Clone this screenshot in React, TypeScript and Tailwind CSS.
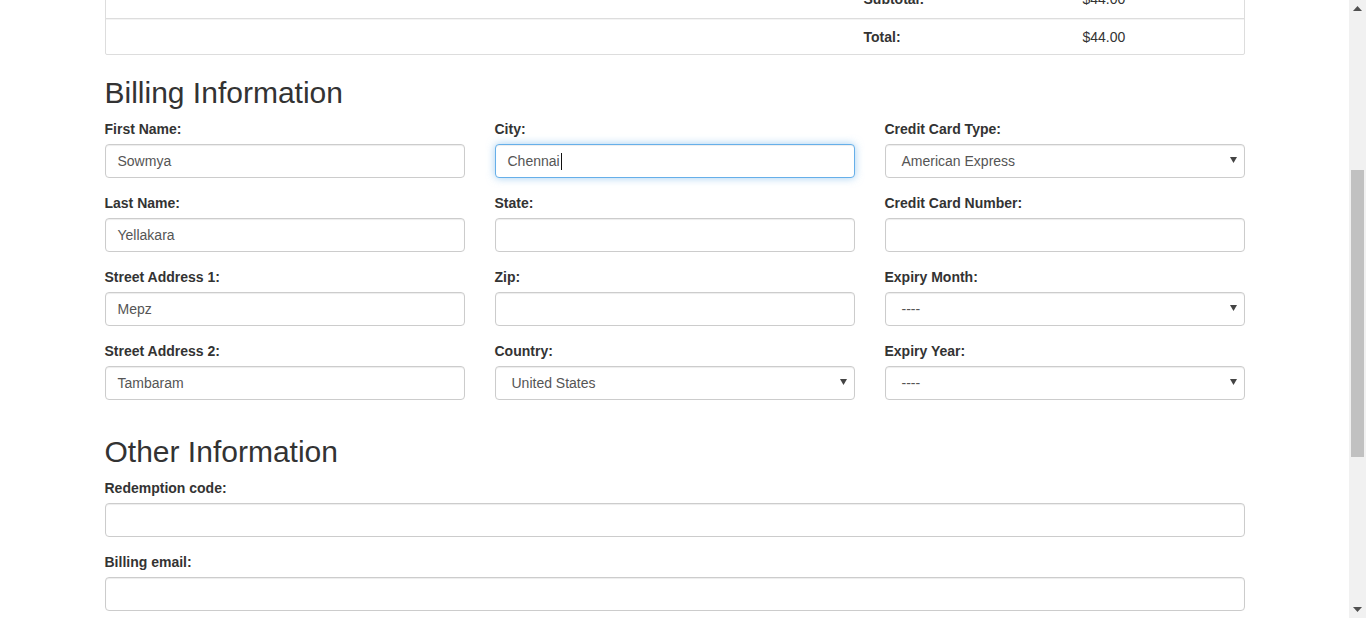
import React from "react";

const font = { fontFamily: '"Liberation Sans", Arial, Helvetica, sans-serif' };

function Label({ children }: { children: React.ReactNode }) {
  return <label className="block text-[14px] leading-[20px] font-bold text-[#333] mb-[5px]">{children}</label>;
}

function TextInput({ value, focused }: { value?: string; focused?: boolean }) {
  return (
    <div
      className={
        "h-[34px] w-full rounded-[4px] border bg-white px-[12px] flex items-center text-[14px] text-[#555] " +
        (focused
          ? "border-[#66afe9] shadow-[inset_0_1px_1px_rgba(0,0,0,0.075),0_0_8px_rgba(102,175,233,0.6)]"
          : "border-[#ccc] shadow-[inset_0_1px_1px_rgba(0,0,0,0.075)]")
      }
    >
      <span className="leading-[20px]">{value}</span>
      {focused && <span className="ml-[1px] inline-block w-[1px] h-[17px] bg-[#111]" />}
    </div>
  );
}

function SelectInput({ value }: { value: string }) {
  return (
    <div className="h-[34px] w-full rounded-[4px] border border-[#ccc] bg-white pl-[16px] pr-[7px] flex items-center justify-between text-[14px] text-[#555] shadow-[inset_0_1px_1px_rgba(0,0,0,0.075)]">
      <span className="leading-[20px]">{value}</span>
      <svg width="7" height="6" viewBox="0 0 7 6" className="mt-[-2px]">
        <path d="M0 0 H7 L3.5 6 Z" fill="#444" />
      </svg>
    </div>
  );
}

function Field({ label, children }: { label: string; children: React.ReactNode }) {
  return (
    <div className="mb-[15px]">
      <Label>{label}</Label>
      {children}
    </div>
  );
}

function Heading({ children }: { children: React.ReactNode }) {
  return <h2 className="mt-[20px] mb-[10px] text-[30px] leading-[33px] font-medium text-[#333]">{children}</h2>;
}

function Scrollbar() {
  return (
    <div className="w-[17px] h-full bg-[#f1f1f1] flex flex-col">
      <div className="h-[17px] flex items-center justify-center">
        <svg width="9" height="5" viewBox="0 0 9 5">
          <path d="M0 5 L4.5 0 L9 5 Z" fill="#505050" />
        </svg>
      </div>
      <div className="flex-1 pt-[153px] px-[2px]">
        <div className="h-[287px] bg-[#c1c1c1]" />
      </div>
      <div className="h-[17px] flex items-center justify-center">
        <svg width="9" height="5" viewBox="0 0 9 5">
          <path d="M0 0 L9 0 L4.5 5 Z" fill="#505050" />
        </svg>
      </div>
    </div>
  );
}

export default function App() {
  return (
    <div className="h-[618px] w-[1366px] overflow-hidden flex bg-white" style={font}>
      <div className="flex-1 overflow-hidden">
        <div className="w-[1170px] mx-auto px-[15px]">
          {/* totals table (scrolled, partially visible) */}
          <div className="mt-[-20px] border border-[#ddd] rounded-b-[2px] text-[14px] text-[#333]">
            <div className="grid grid-cols-[750px_219px_1fr] h-[37px] items-center">
              <div />
              <div className="px-[8px] font-bold">Subtotal:</div>
              <div className="px-[8px]">$44.00</div>
            </div>
            <div className="border-t border-[#ddd]">
              <div className="border-t border-[#f4f4f4] grid grid-cols-[750px_219px_1fr] h-[35px] items-center">
                <div />
                <div className="px-[8px] font-bold">Total:</div>
                <div className="px-[8px]">$44.00</div>
              </div>
            </div>
          </div>

          <div className="pt-[1px]">
            <Heading>Billing Information</Heading>
          </div>
          <div className="grid grid-cols-3 gap-x-[30px]">
            <div>
              <Field label="First Name:"><TextInput value="Sowmya" /></Field>
              <Field label="Last Name:"><TextInput value="Yellakara" /></Field>
              <Field label="Street Address 1:"><TextInput value="Mepz" /></Field>
              <Field label="Street Address 2:"><TextInput value="Tambaram" /></Field>
            </div>
            <div>
              <Field label="City:"><TextInput value="Chennai" focused /></Field>
              <Field label="State:"><TextInput /></Field>
              <Field label="Zip:"><TextInput /></Field>
              <Field label="Country:"><SelectInput value="United States" /></Field>
            </div>
            <div>
              <Field label="Credit Card Type:"><SelectInput value="American Express" /></Field>
              <Field label="Credit Card Number:"><TextInput /></Field>
              <Field label="Expiry Month:"><SelectInput value="----" /></Field>
              <Field label="Expiry Year:"><SelectInput value="----" /></Field>
            </div>
          </div>

          <Heading>Other Information</Heading>
          <Field label="Redemption code:"><TextInput /></Field>
          <Field label="Billing email:"><TextInput /></Field>
        </div>
      </div>
      <Scrollbar />
    </div>
  );
}
